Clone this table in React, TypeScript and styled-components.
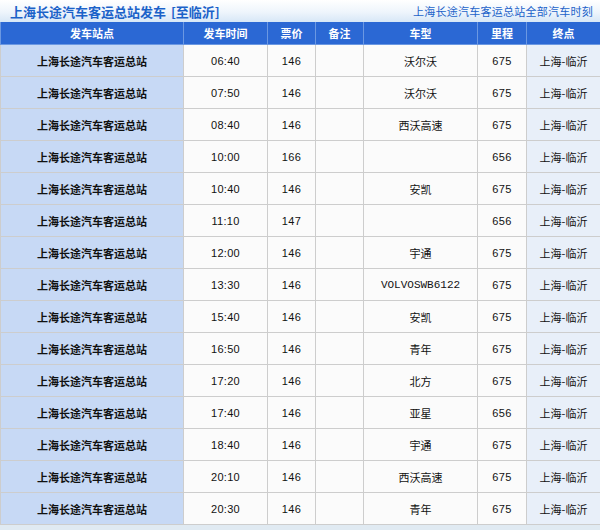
import React from "react";
import styled, { createGlobalStyle } from "styled-components";

const GlobalStyle = createGlobalStyle`
  body {
    margin: 0;
    background: #ffffff;
    font-family: "Liberation Sans", "Noto Sans CJK SC", sans-serif;
  }
`;

interface iTrip {
  time: string;
  price: string;
  bus: string;
  km: string;
}

const trips: iTrip[] = [
  { time: "06:40", price: "146", bus: "沃尔沃", km: "675" },
  { time: "07:50", price: "146", bus: "沃尔沃", km: "675" },
  { time: "08:40", price: "146", bus: "西沃高速", km: "675" },
  { time: "10:00", price: "166", bus: "", km: "656" },
  { time: "10:40", price: "146", bus: "安凯", km: "675" },
  { time: "11:10", price: "147", bus: "", km: "656" },
  { time: "12:00", price: "146", bus: "宇通", km: "675" },
  { time: "13:30", price: "146", bus: "VOLVOSWB6122", km: "675" },
  { time: "15:40", price: "146", bus: "安凯", km: "675" },
  { time: "16:50", price: "146", bus: "青年", km: "675" },
  { time: "17:20", price: "146", bus: "北方", km: "675" },
  { time: "17:40", price: "146", bus: "亚星", km: "656" },
  { time: "18:40", price: "146", bus: "宇通", km: "675" },
  { time: "20:10", price: "146", bus: "西沃高速", km: "675" },
  { time: "20:30", price: "146", bus: "青年", km: "675" },
];

const widths = [183, 84, 48, 48, 114, 49, 74];

function App() {
  return (
    <Container>
      <GlobalStyle />
      <TitleBar>
        <Title>上海长途汽车客运总站发车 [至临沂]</Title>
        <AllLink>上海长途汽车客运总站全部汽车时刻</AllLink>
      </TitleBar>
      <Table>
        <colgroup>
          {widths.map((w, i) => (
            <col key={i} style={{ width: w }} />
          ))}
        </colgroup>
        <thead>
          <tr>
            <Th>发车站点</Th>
            <Th>发车时间</Th>
            <Th>票价</Th>
            <Th>备注</Th>
            <Th>车型</Th>
            <Th>里程</Th>
            <Th>终点</Th>
          </tr>
        </thead>
        <tbody>
          {trips.map((t, i) => (
            <tr key={i}>
              <Td kind="station">上海长途汽车客运总站</Td>
              <Td kind="num">{t.time}</Td>
              <Td kind="num">{t.price}</Td>
              <Td></Td>
              <Td kind={t.bus.startsWith("V") ? "mono" : undefined}>{t.bus}</Td>
              <Td kind="num">{t.km}</Td>
              <Td kind="end">上海-临沂</Td>
            </tr>
          ))}
        </tbody>
      </Table>
      <Footer />
    </Container>
  );
}

export default App;

const Container = styled.div`
  width: 600px;
  height: 530px;
  overflow: hidden;
`;

const TitleBar = styled.div`
  height: 22px;
  display: flex;
  align-items: center;
  justify-content: space-between;
  padding: 0 7px 0 10px;
  background: linear-gradient(to bottom, #ffffff 0%, #eef5fc 55%, #d7e7f7 100%);
`;

const Title = styled.div`
  font-family: "Noto Sans CJK SC", sans-serif;
  font-size: 13px;
  font-weight: bold;
  color: #1b62c9;
  word-spacing: 2px;
`;

const AllLink = styled.div`
  font-family: "Noto Sans CJK SC", sans-serif;
  font-size: 11px;
  letter-spacing: 0.25px;
  color: #1b62c9;
`;

const Table = styled.table`
  width: 600px;
  table-layout: fixed;
  border-collapse: collapse;
  font-size: 11px;
`;

const Th = styled.th`
  height: 22px;
  padding: 0;
  background: #2b68d4;
  color: #ffffff;
  font-family: "Noto Sans CJK SC", sans-serif;
  font-size: 11px;
  font-weight: bold;
  text-align: center;
  border: 1px solid #6b98e2;
  border-top: none;
`;

const Td = styled.td<{ kind?: "station" | "num" | "end" | "mono" }>`
  height: 31px;
  padding: 0;
  text-align: center;
  border: 1px solid #cdcdcd;
  color: #111111;
  white-space: nowrap;
  background: ${(p) =>
    p.kind === "station" ? "#c7d9f5" : p.kind === "end" ? "#e8eff9" : "#fbfbfb"};
  font-family: ${(p) =>
    p.kind === "num"
      ? `"Liberation Sans", sans-serif`
      : p.kind === "mono"
      ? `"Liberation Mono", monospace`
      : `"Noto Sans CJK SC", sans-serif`};
  font-size: 11px;
  font-weight: ${(p) => (p.kind === "station" ? "bold" : "normal")};
  letter-spacing: ${(p) => (p.kind === "num" ? "0.3px" : "0")};
`;

const Footer = styled.div`
  height: 6px;
  background: #e0eaf2;
`;
